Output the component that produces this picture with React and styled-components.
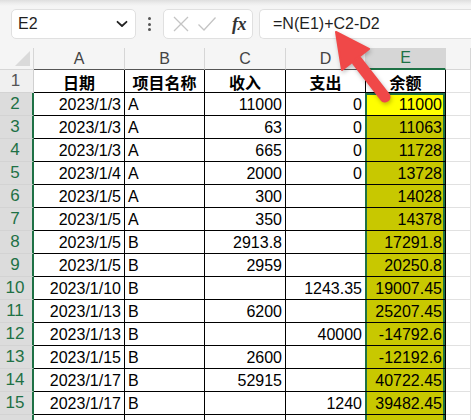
import React from "react";
import styled, { createGlobalStyle } from "styled-components";

const Global = createGlobalStyle`
  html, body { margin: 0; padding: 0; background: #ffffff; }
  * { box-sizing: border-box; }
`;

const GREEN = "#1e7145";

const Page = styled.div`
  position: relative;
  width: 471px;
  height: 420px;
  overflow: hidden;
  background: #ffffff;
  font-family: "Liberation Sans", Arial, "Noto Sans CJK SC", sans-serif;
`;

const Toolbar = styled.div`
  height: 48px;
  display: flex;
  align-items: center;
  padding-left: 11px;
  background: linear-gradient(#dedede 0px, #ececec 3px, #f5f5f5 6px, #f5f5f5 100%);
`;

const NameBox = styled.div`
  width: 125px;
  height: 30px;
  background: #fff;
  border: 1px solid #e0e0e0;
  border-radius: 5px;
  display: flex;
  align-items: center;
  justify-content: space-between;
  padding: 0 7px 0 6px;
  font-size: 16px;
  color: #1f1f1f;
`;

const Dots = styled.div`
  width: 27px;
  display: flex;
  flex-direction: column;
  align-items: center;
  gap: 2.5px;
  span {
    width: 3px;
    height: 3px;
    border-radius: 50%;
    background: #555;
  }
`;

const EditBox = styled.div`
  width: 90px;
  height: 30px;
  background: #fff;
  border: 1px solid #e0e0e0;
  border-radius: 5px;
  display: flex;
  align-items: center;
  padding: 0 6px 0 8px;
  gap: 7px;
`;

const Fx = styled.span`
  margin-left: auto;
  font-family: "Liberation Serif", "DejaVu Serif", serif;
  font-style: italic;
  font-size: 18px;
  font-weight: 700;
  color: #333;
  letter-spacing: -0.5px;
`;

const FormulaInput = styled.div`
  flex: 1;
  height: 30px;
  margin-left: 6px;
  background: #fff;
  border: 1px solid #e0e0e0;
  border-right: none;
  border-radius: 5px 0 0 5px;
  display: flex;
  align-items: center;
  padding-left: 13px;
  font-size: 16px;
  color: #1f1f1f;
`;

const Sheet = styled.div`
  display: grid;
  grid-template-columns: 34px 91px 80px 81px 80px 80px 1fr;
  grid-template-rows: 22px repeat(16, 23px);
`;

const Corner = styled.div`
  background: #f5f5f5;
  border-right: 1px solid #d6d6d6;
  border-bottom: 1px solid #d6d6d6;
  position: relative;
  &::after {
    content: "";
    position: absolute;
    right: 3px;
    bottom: 3px;
    width: 0;
    height: 0;
    border-left: 15px solid transparent;
    border-bottom: 15px solid #dadada;
  }
`;

const ColHead = styled.div`
  background: ${(p) => (p.$active ? "#d6d6d6" : "#f5f5f5")};
  color: ${(p) => (p.$active ? GREEN : "#444")};
  font-size: 16px;
  display: flex;
  align-items: center;
  justify-content: center;
  border-right: 1px solid #d6d6d6;
  border-bottom: ${(p) => (p.$active ? `2px solid ${GREEN}` : p.$table ? "1px solid #555" : "1px solid #d6d6d6")};
`;

const RowHead = styled.div`
  background: ${(p) => (p.$active ? "#dcdcdc" : "#f0f0f0")};
  color: ${(p) => (p.$active ? GREEN : "#555")};
  font-size: 17px;
  display: flex;
  align-items: center;
  justify-content: center;
  padding-right: 2px;
  border-bottom: 1px solid #d3d3d3;
  border-right: ${(p) => (p.$active ? `2px solid ${GREEN}` : "1px solid #d0d0d0")};
`;

const Cell = styled.div`
  font-size: 16px;
  font-weight: ${(p) => (p.$bold ? 700 : 400)};
  font-family: ${(p) =>
    p.$bold
      ? `"Noto Sans CJK SC", "Liberation Sans", sans-serif`
      : `"Liberation Sans", Arial, sans-serif`};
  color: #000;
  white-space: nowrap;
  overflow: hidden;
  display: flex;
  align-items: center;
  padding: 1px 3px 0 3px;
  justify-content: ${(p) =>
    p.$align === "right" ? "flex-end" : p.$align === "center" ? "center" : "flex-start"};
  background: ${(p) => p.$fill || "#fff"};
  border-right: 1px solid ${(p) => (p.$grid ? "#e1e1e1" : "#000")};
  border-bottom: 1px solid ${(p) => (p.$grid ? "#e1e1e1" : "#000")};
  box-shadow: ${(p) =>
    p.$sel === "top"
      ? `inset 2px 0 ${GREEN}, inset -2px 0 ${GREEN}, inset 0 2px ${GREEN}`
      : p.$sel
      ? `inset 2px 0 ${GREEN}, inset -2px 0 ${GREEN}`
      : "none"};
  margin-left: ${(p) => (p.$sel ? "-1px" : "0")};
`;

const ArrowLayer = styled.svg`
  position: absolute;
  left: 0;
  top: 0;
  width: 471px;
  height: 420px;
  pointer-events: none;
  filter: drop-shadow(1px 2px 2px rgba(0, 0, 0, 0.25));
`;

const rows = [
  ["2023/1/3", "A", "11000", "0", "11000"],
  ["2023/1/3", "A", "63", "0", "11063"],
  ["2023/1/3", "A", "665", "0", "11728"],
  ["2023/1/4", "A", "2000", "0", "13728"],
  ["2023/1/5", "A", "300", "", "14028"],
  ["2023/1/5", "A", "350", "", "14378"],
  ["2023/1/5", "B", "2913.8", "", "17291.8"],
  ["2023/1/5", "B", "2959", "", "20250.8"],
  ["2023/1/10", "B", "", "1243.35", "19007.45"],
  ["2023/1/13", "B", "6200", "", "25207.45"],
  ["2023/1/13", "B", "", "40000", "-14792.6"],
  ["2023/1/15", "B", "2600", "", "-12192.6"],
  ["2023/1/17", "B", "52915", "", "40722.45"],
  ["2023/1/17", "B", "", "1240", "39482.45"],
  ["", "", "", "", ""],
];

const headers = ["日期", "项目名称", "收入", "支出", "余额"];

export default function App() {
  return (
    <Page>
      <Global />
      <Toolbar>
        <NameBox>
          <span>E2</span>
          <svg width="12" height="8" viewBox="0 0 12 8">
            <path d="M1.5 1.8 L6 6 L10.5 1.8" fill="none" stroke="#222" strokeWidth="1.8" strokeLinecap="round" strokeLinejoin="round" />
          </svg>
        </NameBox>
        <Dots>
          <span />
          <span />
          <span />
        </Dots>
        <EditBox>
          <svg width="18" height="18" viewBox="0 0 18 18">
            <path d="M2 2 L16 16 M16 2 L2 16" stroke="#c4c4c4" strokeWidth="1.3" fill="none" />
          </svg>
          <svg width="20" height="18" viewBox="0 0 20 18">
            <path d="M1.5 9.5 L7 15 L18.5 2.5" stroke="#c4c4c4" strokeWidth="1.3" fill="none" />
          </svg>
          <Fx>fx</Fx>
        </EditBox>
        <FormulaInput>=N(E1)+C2-D2</FormulaInput>
      </Toolbar>
      <Sheet>
        <Corner />
        {["A", "B", "C", "D", "E"].map((c) => (
          <ColHead key={c} $table $active={c === "E"}>
            {c}
          </ColHead>
        ))}
        <ColHead />
        <RowHead>1</RowHead>
        {headers.map((h) => (
          <Cell key={h} $bold $align="center">
            {h}
          </Cell>
        ))}
        <Cell $grid />
        {rows.map((r, i) => {
          const last = i === rows.length - 1;
          return (
            <React.Fragment key={i}>
              <RowHead $active>{last ? "" : i + 2}</RowHead>
              <Cell $align="right">{r[0]}</Cell>
              <Cell>{r[1]}</Cell>
              <Cell $align="right">{r[2]}</Cell>
              <Cell $align="right">{r[3]}</Cell>
              <Cell
                $align="right"
                $fill={i === 0 ? "#ffff00" : "#c8c800"}
                $sel={i === 0 ? "top" : "mid"}
              >
                {r[4]}
              </Cell>
              <Cell $grid />
            </React.Fragment>
          );
        })}
      </Sheet>
      <ArrowLayer viewBox="0 0 471 420">
        <line x1="357" y1="61" x2="385" y2="97" stroke="#f04848" strokeWidth="11" strokeLinecap="round" />
        <polygon points="336,32 369,49 342,70" fill="#f04848" stroke="#f04848" strokeWidth="2" strokeLinejoin="round" />
      </ArrowLayer>
    </Page>
  );
}
